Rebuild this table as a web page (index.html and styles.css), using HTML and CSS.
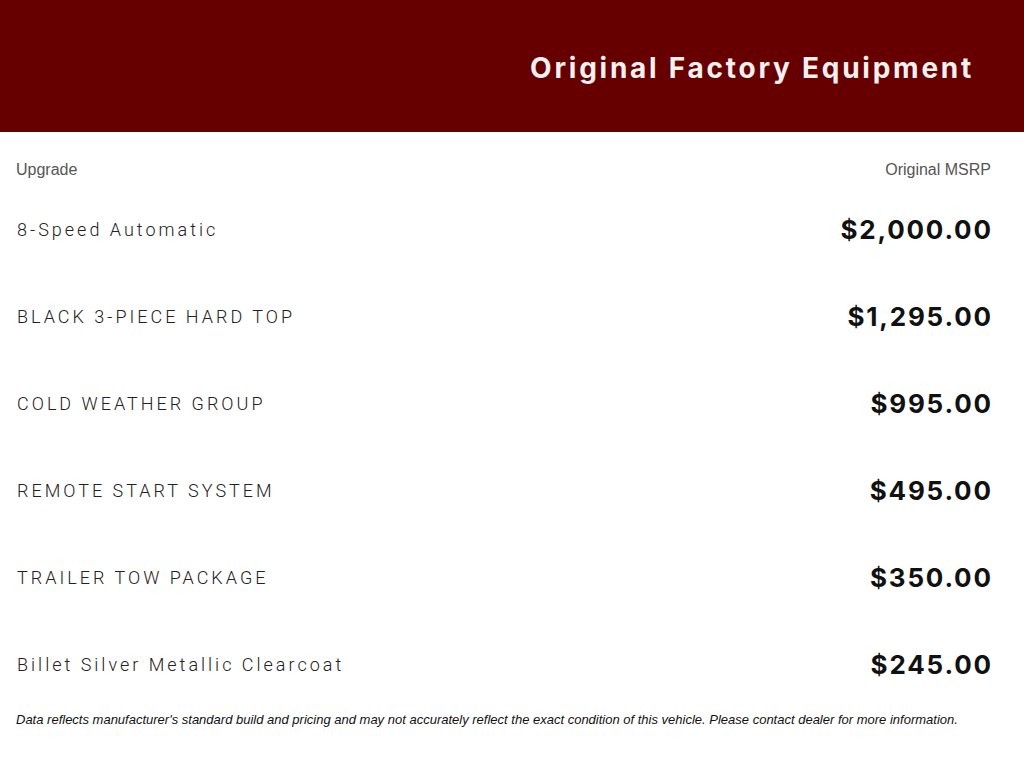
FILE: index.html
```html
<!DOCTYPE html>
<html lang="en">
<head>
<meta charset="utf-8">
<title>Original Factory Equipment</title>
<link rel="stylesheet" href="styles.css">
</head>
<body>
<header class="banner">
  <h1 class="banner-title">Original Factory Equipment</h1>
</header>
<main class="equipment">
  <div class="equipment-head">
    <span>Upgrade</span>
    <span>Original MSRP</span>
  </div>
  <ul class="equipment-list">
    <li class="item"><span class="item-name">8-Speed Automatic</span><span class="item-price">$2,000.00</span></li>
    <li class="item"><span class="item-name">BLACK 3-PIECE HARD TOP</span><span class="item-price">$1,295.00</span></li>
    <li class="item"><span class="item-name">COLD WEATHER GROUP</span><span class="item-price">$995.00</span></li>
    <li class="item"><span class="item-name">REMOTE START SYSTEM</span><span class="item-price">$495.00</span></li>
    <li class="item"><span class="item-name">TRAILER TOW PACKAGE</span><span class="item-price">$350.00</span></li>
    <li class="item"><span class="item-name">Billet Silver Metallic Clearcoat</span><span class="item-price">$245.00</span></li>
  </ul>
  <p class="disclaimer">Data reflects manufacturer's standard build and pricing and may not accurately reflect the exact condition of this vehicle. Please contact dealer for more information.</p>
</main>
</body>
</html>
```
FILE: styles.css
```css
* { box-sizing: border-box; }
html, body { margin: 0; padding: 0; background: #fff; }
body { font-family: "Liberation Sans", Arial, sans-serif; color: #111; }

.banner {
  height: 132px;
  background: #660000;
  display: flex;
  align-items: center;
  justify-content: flex-end;
  padding: 4px 50px 0 0;
}
.banner-title {
  margin: 0;
  color: #f4f0f0;
  font-family: "Inter", sans-serif;
  font-weight: 700;
  font-size: 28px;
  letter-spacing: 2.75px;
  line-height: 1;
}

.equipment {
  padding: 22px 33px 0 16px;
}
.equipment-head {
  display: flex;
  justify-content: space-between;
  height: 32px;
  align-items: center;
  font-size: 16px;
  color: #555;
}
.equipment-list {
  list-style: none;
  margin: 0;
  padding: 0;
}
.item {
  height: 87px;
  display: flex;
  align-items: center;
  justify-content: space-between;
}
.item-name {
  font-family: "Roboto", sans-serif;
  font-weight: 300;
  font-size: 18px;
  letter-spacing: 3px;
  color: #222;
  padding-left: 1px;
}
.item-price {
  font-family: "Inter", sans-serif;
  font-weight: 700;
  font-size: 26px;
  letter-spacing: 1.8px;
  color: #111;
  margin-right: -1.8px;
}
.disclaimer {
  margin: 4px 0 0;
  font-size: 13px;
  font-style: italic;
  color: #111;
  line-height: 16px;
}
```
